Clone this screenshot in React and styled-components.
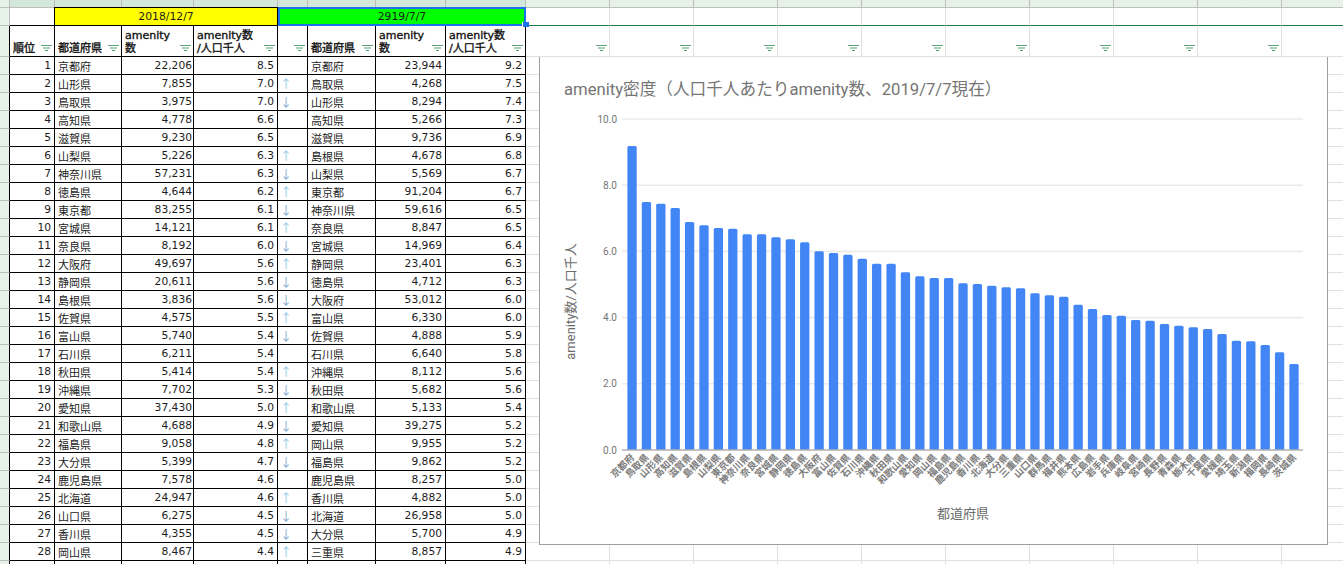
import React from 'react';
import styled, { createGlobalStyle } from 'styled-components';

const Global = createGlobalStyle`
  html, body { margin: 0; padding: 0; background: #fff; overflow: hidden; }
  #root { width: 1343px; height: 564px; overflow: hidden; }
`;

const BLACK = '#000';
const GRID = '#e0e0e0';
const HEAD_LINE = '#bdbdbd';
const WIDTHS = [10, 45, 67, 72, 84, 30, 68, 70, 80, 84, 84, 84, 84, 84, 84, 84, 84, 84, 84];
const LETTERS = ['', 'A', 'B', 'C', 'D', 'E', 'F', 'G', 'H', 'I', 'J', 'K', 'L', 'M', 'N', 'O', 'P', 'Q', 'R'];

const Sheet = styled.div`
  position: relative;
  width: 1343px;
  height: 564px;
  overflow: hidden;
  display: grid;
  grid-template-columns: ${WIDTHS.map((w) => `${w}px`).join(' ')};
  grid-template-rows: 8px 18px 31px;
  grid-auto-rows: 18px;
  font-family: "DejaVu Sans", "Noto Sans CJK JP", sans-serif;
  font-size: 10.7px;
  color: #1c1c1c;
`;

const BandCell = styled.div`
  box-sizing: border-box;
  background: ${(p) => (p.$active ? '#d3e7da' : '#e6f2e8')};
  border-right: 1px solid ${HEAD_LINE};
  border-bottom: 1px solid ${HEAD_LINE};
  overflow: hidden;
  text-align: center;
  font: 11px/12px Roboto, sans-serif;
  color: #5f6368;
`;

const BandLetter = styled.div`
  margin-top: -10px;
`;

const RowHead = styled.div`
  box-sizing: border-box;
  background: #e6f2e8;
  border-right: 1px solid ${(p) => (p.$dark ? BLACK : HEAD_LINE)};
  border-bottom: 1px solid ${HEAD_LINE};
`;

const BlankTop = styled.div`
  box-sizing: border-box;
  background: #fff;
  border-bottom: 1px solid ${BLACK};
`;

const GroupCell = styled.div`
  box-sizing: border-box;
  grid-column: span ${(p) => p.$span};
  background: ${(p) => p.$bg};
  margin-top: -1px;
  display: flex;
  align-items: center;
  justify-content: center;
  font-size: 10.8px;
  border: ${(p) => (p.$selected ? '2px solid #1a73e8' : `1px solid ${BLACK}`)};
  margin-left: ${(p) => (p.$selected ? '0' : '-1px')};
`;

const Handle = styled.div`
  position: absolute;
  left: 522px;
  top: 22px;
  width: 6px;
  height: 5px;
  background: #1a73e8;
  border-left: 1px solid #fff;
`;

const OpenTop = styled.div`
  box-sizing: border-box;
  border-right: 1px solid ${GRID};
  border-bottom: 1px solid #1f7a4d;
`;

const HeaderCell = styled.div`
  box-sizing: border-box;
  display: flex;
  align-items: flex-end;
  justify-content: space-between;
  padding: 0 2px 0 3px;
  border-right: 1px solid ${(p) => (p.$open ? GRID : BLACK)};
  border-bottom: 1px solid ${(p) => (p.$open ? GRID : BLACK)};
  font-size: 11px;
  font-weight: 400;
  line-height: 13px;
  color: #111;
  -webkit-text-stroke: 0.35px #111;
`;

const HeaderText = styled.span`
  white-space: pre;
  padding-bottom: 1px;
`;

const FilterMark = styled.svg`
  flex: none;
  width: 11px;
  height: 6px;
  margin: 0 0 5px auto;
`;

const DataCell = styled.div`
  box-sizing: border-box;
  display: flex;
  align-items: center;
  justify-content: ${(p) => (p.$num ? 'flex-end' : 'flex-start')};
  padding: ${(p) => (p.$num ? `0 ${p.$pad ?? 2}px 0 0` : '0 0 0 3px')};
  border-right: 1px solid ${BLACK};
  border-bottom: 1px solid ${BLACK};
  font-size: ${(p) => (p.$num ? '10.7px' : '11px')};
  white-space: nowrap;
  overflow: hidden;
`;

const ArrowCell = styled(DataCell)`
  padding: 0 0 0 2px;
  font-family: "Noto Sans CJK JP", sans-serif;
  font-size: 12px;
  color: ${(p) => (p.$up ? '#8ec8ea' : '#7fa8d2')};
`;

const EmptyCell = styled.div`
  box-sizing: border-box;
  border-right: 1px solid ${GRID};
  border-bottom: 1px solid ${GRID};
`;

const ChartPanel = styled.div`
  position: absolute;
  left: 539px;
  top: 57px;
  width: 789px;
  height: 488px;
  box-sizing: border-box;
  background: #fff;
  border: 1px solid #9e9e9e;
  border-top: none;
`;

const ChartSvg = styled.svg`
  display: block;
  width: 787px;
  height: 487px;
`;

const ChartTitle = styled.text`
  font: 16.65px Roboto, "Noto Sans CJK JP", sans-serif;
  fill: #757575;
`;

const AxisTick = styled.text`
  font: 10px Roboto, sans-serif;
  fill: #757575;
  text-anchor: end;
`;

const AxisTitle = styled.text`
  font: 13px Roboto, "Noto Sans CJK JP", sans-serif;
  fill: #6b6b6b;
  text-anchor: middle;
`;

const CategoryLabel = styled.text`
  font: 700 9.5px "Noto Sans CJK JP", sans-serif;
  fill: #7c7c7c;
  text-anchor: end;
`;

const ROWS = [
  [1, '京都府', '22,206', '8.5', '', '京都府', '23,944', '9.2'],
  [2, '山形県', '7,855', '7.0', 'u', '鳥取県', '4,268', '7.5'],
  [3, '鳥取県', '3,975', '7.0', 'd', '山形県', '8,294', '7.4'],
  [4, '高知県', '4,778', '6.6', '', '高知県', '5,266', '7.3'],
  [5, '滋賀県', '9,230', '6.5', '', '滋賀県', '9,736', '6.9'],
  [6, '山梨県', '5,226', '6.3', 'u', '島根県', '4,678', '6.8'],
  [7, '神奈川県', '57,231', '6.3', 'd', '山梨県', '5,569', '6.7'],
  [8, '徳島県', '4,644', '6.2', 'u', '東京都', '91,204', '6.7'],
  [9, '東京都', '83,255', '6.1', 'd', '神奈川県', '59,616', '6.5'],
  [10, '宮城県', '14,121', '6.1', 'u', '奈良県', '8,847', '6.5'],
  [11, '奈良県', '8,192', '6.0', 'd', '宮城県', '14,969', '6.4'],
  [12, '大阪府', '49,697', '5.6', 'u', '静岡県', '23,401', '6.3'],
  [13, '静岡県', '20,611', '5.6', 'd', '徳島県', '4,712', '6.3'],
  [14, '島根県', '3,836', '5.6', 'd', '大阪府', '53,012', '6.0'],
  [15, '佐賀県', '4,575', '5.5', 'u', '富山県', '6,330', '6.0'],
  [16, '富山県', '5,740', '5.4', 'd', '佐賀県', '4,888', '5.9'],
  [17, '石川県', '6,211', '5.4', '', '石川県', '6,640', '5.8'],
  [18, '秋田県', '5,414', '5.4', 'u', '沖縄県', '8,112', '5.6'],
  [19, '沖縄県', '7,702', '5.3', 'd', '秋田県', '5,682', '5.6'],
  [20, '愛知県', '37,430', '5.0', 'u', '和歌山県', '5,133', '5.4'],
  [21, '和歌山県', '4,688', '4.9', 'd', '愛知県', '39,275', '5.2'],
  [22, '福島県', '9,058', '4.8', 'u', '岡山県', '9,955', '5.2'],
  [23, '大分県', '5,399', '4.7', 'd', '福島県', '9,862', '5.2'],
  [24, '鹿児島県', '7,578', '4.6', '', '鹿児島県', '8,257', '5.0'],
  [25, '北海道', '24,947', '4.6', 'u', '香川県', '4,882', '5.0'],
  [26, '山口県', '6,275', '4.5', 'd', '北海道', '26,958', '5.0'],
  [27, '香川県', '4,355', '4.5', 'd', '大分県', '5,700', '4.9'],
  [28, '岡山県', '8,467', '4.4', 'u', '三重県', '8,857', '4.9'],
  ['', '', '', '', '', '', '', ''],
];

const PREFS = '京都府 鳥取県 山形県 高知県 滋賀県 島根県 山梨県 東京都 神奈川県 奈良県 宮城県 静岡県 徳島県 大阪府 富山県 佐賀県 石川県 沖縄県 秋田県 和歌山県 愛知県 岡山県 福島県 鹿児島県 香川県 北海道 大分県 三重県 山口県 群馬県 福井県 熊本県 広島県 岩手県 兵庫県 岐阜県 宮崎県 長野県 青森県 栃木県 千葉県 愛媛県 埼玉県 新潟県 福岡県 長崎県 茨城県'.split(' ');

const TOPS = [
  146, 202, 203.7, 208, 222, 225.3, 228, 228.7, 234.3, 234.3, 237.3, 239.3, 242.3, 251.3, 253, 254.7, 258.7,
  263.7, 263.7, 272.3, 276.3, 278, 278, 283.3, 284, 285.7, 287.3, 288.3, 293.3, 295.3, 296.7, 304.7, 309,
  315, 315.7, 320, 320.7, 324, 325.7, 327.3, 329, 334, 340.7, 341.3, 345, 352.3, 364,
];

const HEAD = ['順位', '都道府県', 'amenity\n数', 'amenity数\n/人口千人', '', '都道府県', 'amenity\n数', 'amenity数\n/人口千人'];

const Filter = () => (
  <FilterMark viewBox="0 0 11 6">
    <rect x="0" y="0" width="11" height="1" fill="#5f9f7a" />
    <rect x="2" y="2" width="7" height="2" fill="#a9d3b9" />
    <rect x="4" y="5" width="3" height="1" fill="#43a06f" />
  </FilterMark>
);

const Chart = () => {
  const ticks = [
    ['10.0', 119],
    ['8.0', 185.2],
    ['6.0', 251.4],
    ['4.0', 317.6],
    ['2.0', 383.8],
    ['0.0', 450],
  ];
  return (
    <ChartPanel>
      <ChartSvg viewBox="540 57 787 487">
        <ChartTitle x="564" y="95">amenity密度（人口千人あたりamenity数、2019/7/7現在）</ChartTitle>
        {ticks.map(([t, y]) => (
          <g key={t}>
            {t !== '0.0' && <line x1="622" x2="1303" y1={y} y2={y} stroke="#ebebeb" strokeWidth="1.6" />}
            <AxisTick x="617" y={y + 3.5}>{t}</AxisTick>
          </g>
        ))}
        {TOPS.map((top, i) => (
          <path
            key={PREFS[i]}
            d={`M${(627.4 + i * 14.39).toFixed(2)} 450V${top + 1.5}q0-1.5 1.5-1.5h6.3q1.5 0 1.5 1.5V450z`}
            fill="#4285f4"
          />
        ))}
        <line x1="622" x2="1303" y1="450" y2="450" stroke="#b0b0b0" strokeWidth="1.5" />
        {PREFS.map((name, i) => {
          const x = 635 + i * 14.39;
          return (
            <CategoryLabel key={name} transform={`translate(${x.toFixed(2)} 458) rotate(-45)`}>
              {name}
            </CategoryLabel>
          );
        })}
        <AxisTitle x="963" y="518">都道府県</AxisTitle>
        <AxisTitle transform="translate(575 301.5) rotate(-90)">amenity数/人口千人</AxisTitle>
      </ChartSvg>
    </ChartPanel>
  );
};

export default function App() {
  const openCols = WIDTHS.slice(9);
  return (
    <>
      <Global />
      <Sheet>
        {WIDTHS.map((_, i) => (
          <BandCell key={i} $active={i > 0 && i < 9}>
            <BandLetter>{LETTERS[i]}</BandLetter>
          </BandCell>
        ))}

        <RowHead />
        <BlankTop />
        <GroupCell $span={3} $bg="#ffff00">2018/12/7</GroupCell>
        <GroupCell $span={4} $bg="#00ff00" $selected>2919/7/7</GroupCell>
        {openCols.map((_, i) => <OpenTop key={i} />)}

        <RowHead $dark />
        {HEAD.map((h, i) => (
          <HeaderCell key={i}>
            <HeaderText>{h}</HeaderText>
            <Filter />
          </HeaderCell>
        ))}
        {openCols.map((_, i) => (
          <HeaderCell key={i} $open>
            {i < 9 && <Filter />}
          </HeaderCell>
        ))}

        {ROWS.map((r, ri) => (
          <React.Fragment key={ri}>
            <RowHead $dark />
            <DataCell $num $pad={3}>{r[0]}</DataCell>
            <DataCell>{r[1]}</DataCell>
            <DataCell $num $pad={1}>{r[2]}</DataCell>
            <DataCell $num $pad={3}>{r[3]}</DataCell>
            <ArrowCell $up={r[4] === 'u'}>{r[4] === 'u' ? '↑' : r[4] === 'd' ? '↓' : ''}</ArrowCell>
            <DataCell>{r[5]}</DataCell>
            <DataCell $num $pad={3}>{r[6]}</DataCell>
            <DataCell $num $pad={3}>{r[7]}</DataCell>
            {openCols.map((_, i) => <EmptyCell key={i} />)}
          </React.Fragment>
        ))}

        <Handle />
        <Chart />
      </Sheet>
    </>
  );
}
